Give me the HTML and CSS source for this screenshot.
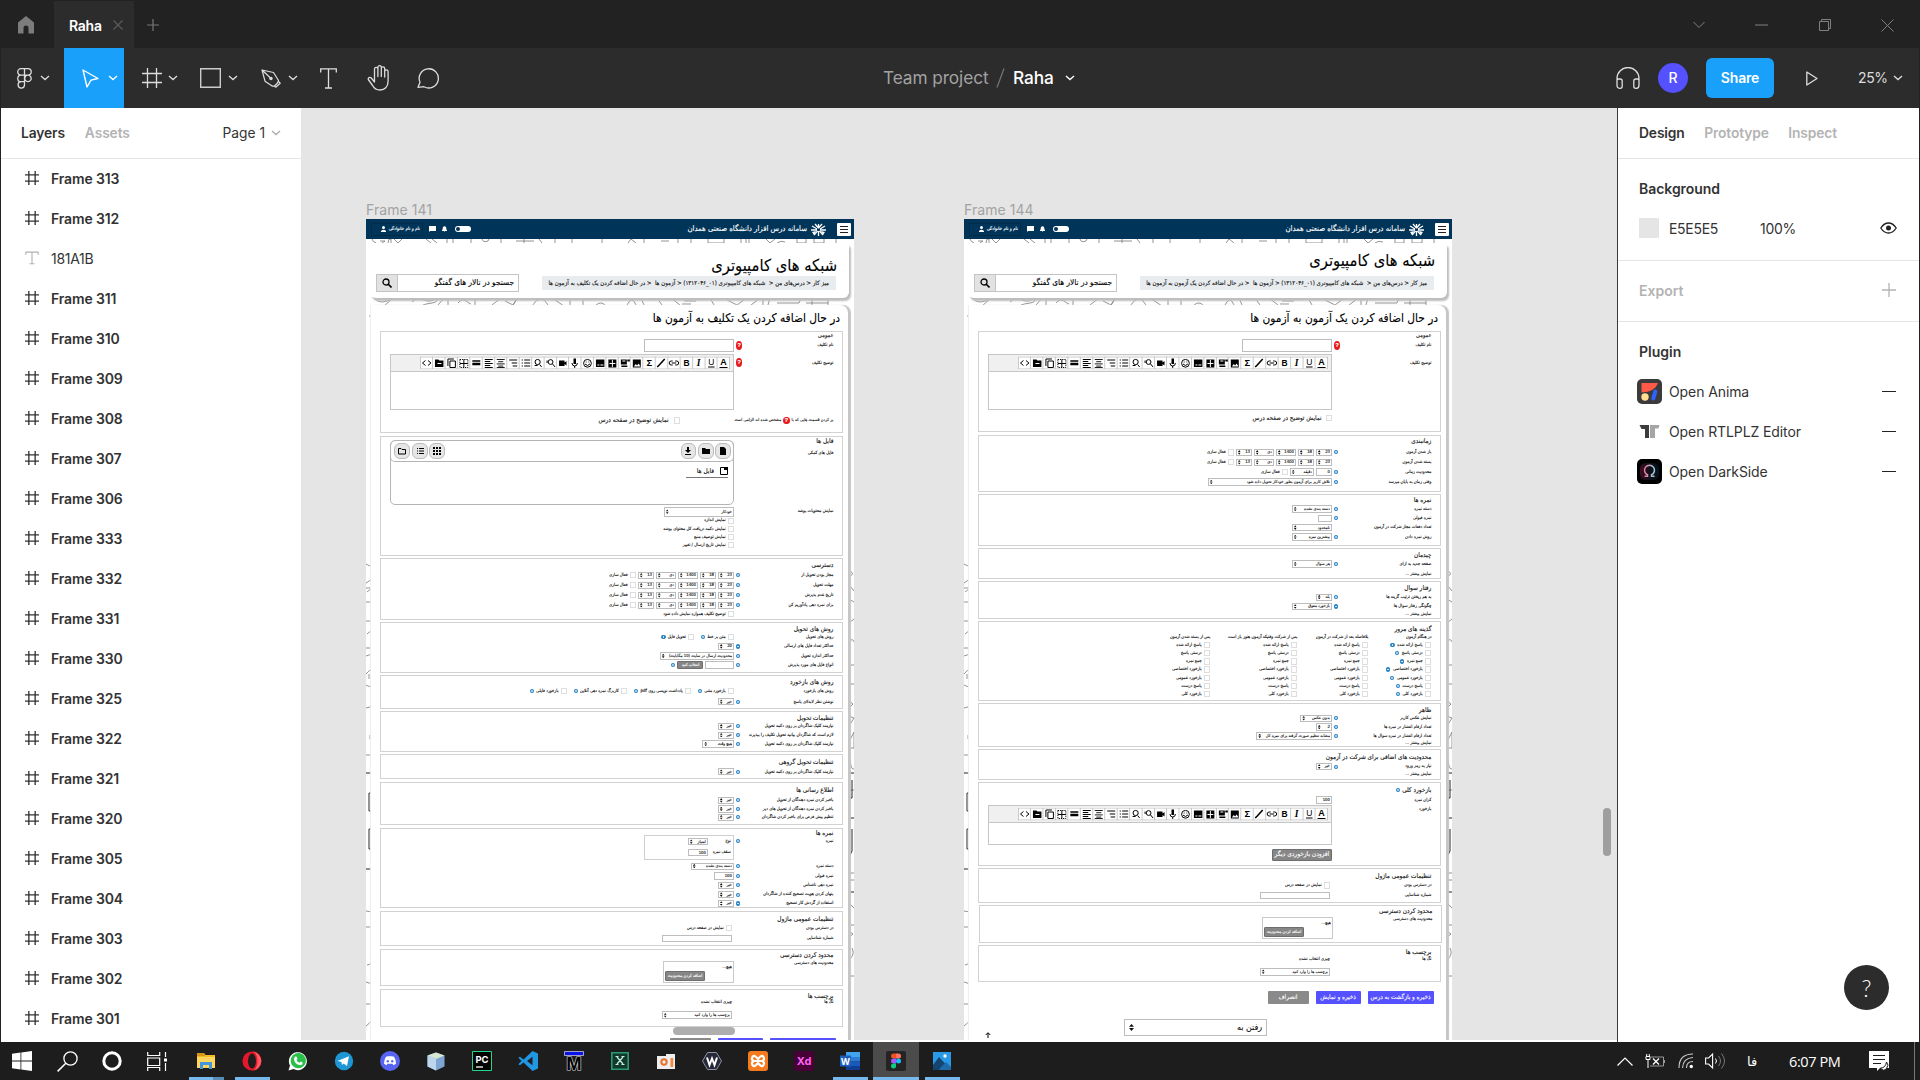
FILE: index.html
```html
<!DOCTYPE html>
<html lang="en">
<head>
<meta charset="utf-8">
<title>Raha</title>
<link rel="stylesheet" href="styles.css">
</head>
<body>
<svg class="defs" width="0" height="0">
  <symbol id="chev" viewBox="0 0 10 6"><path d="M1 1l4 3.6L9 1" fill="none" stroke="currentColor" stroke-width="1.3"/></symbol>
  <symbol id="hash" viewBox="0 0 20 20"><path d="M5.5 0v20M14.5 0v20M0 5.500h20M0 14.500h20" fill="none" stroke="currentColor" stroke-width="1.300"/></symbol>
  <symbol id="hashb" viewBox="0 0 20 20"><path d="M5.5 0v20M14.5 0v20M0 5.500h20M0 14.500h20" fill="none" stroke="currentColor" stroke-width="1.900"/></symbol>
  <symbol id="doodle" viewBox="0 0 488 821">
    <g fill="none" stroke="#777" stroke-width=".8">
      <path d="M6 20q1 3 4 4M14 22h5l-3 2M22 24l1-4h2v4M28 20l4 4 4-4M60 20l5 4M66 20l5 4M81 20v4M87 20v4M105 20v4M116 20q1 4 6 2l1-2M135 20v4M150 22h18M158 20v4M173 20l3 4M189 20v4M206 20v4M236 20v4M262 24l3-4 5 4M278 20v4M295 22h8M312 20v4M325 20v4M342 20v4h16v-4M375 20v4M380 20v4M383 20v4M400 20l4 4 5-4M411 24q4-3 8-1M431 20v4h9v-4M448 20v4h10v-4M470 20v4"/>
      <path d="M8 79q7 8 19 0M26 80l-8 7M46 83q5-5 12-2t12-2q3 4-4 5t-9 2M72 86l6-7M82 79v7M92 84q4-5 8-2t5 3M109 79v7M126 86l9-7M139 82l8 4 4-7M147 86l5-7M166 87q9-14 16-1M186 79l12 8M204 79v7M217 79v7M230 86q5-4 9 0M261 86q5-10 9 0M275 79l3 7M291 79l5 7M305 79l9 7M318 82h12M316 85h9M344 79l4 7M361 81l10 5 8-6M385 86l8-6h10M397 79v7M404 79l-2 7M411 84h22l2-5M440 80h22M440 84h22M446 79v7M462 79v7"/>
      <path d="M3 97h4l-2 6M0 345l6 3M0 364l6-4M0 369h6l-5 4M0 383h6M0 402h6M1 415l5-4M0 429h6M0 437l6-2M0 455q5-6 6-3M0 466q5 3 6 0M0 489q5 0 6-4M3 455v5M4 516v4M0 536h6M0 692l6 1M0 708h6M1 746q6 0 4-10M0 763l6 2M0 785h6M0 807q3-2 6-6"/>
      <path d="M483 352q7 2 0 6M484 367l4 5M483 380l5 3M483 404l5-4M483 422q4-3 5 1M483 446h5M484 465h4M483 482l4 3-4 4M483 497l5 2-5 8M484 521l4-8v16M483 529h5M484 541q1 10 4 9M483 571h5M483 654h5M483 661h5M484 685l4 4M483 706h5M483 712l4 3-4 3M484 740q5-5 2-11M483 757h5M484 781v22"/>
    </g>
    <path d="M0 554h6M6 574H3v18h3M6 610H3v20h3M0 650h6M483 554h5M483 579h3v-18M483 599h5M486 610v22l-3 6M483 673h5" fill="none" stroke="#222"/>
  </symbol>
  <symbol id="edtools" viewBox="0 0 311 13">
    <path d="M0 0h311v13H0z" fill="#fff"/>
    <path d="M.5 0v13M12.500 0v13M25 0v13M37.500 0v13M50 0v13M62.500 0v13M75 0v13M87 0v13M99.500 0v13M112 0v13M124.500 0v13M137 0v13M149 0v13M161.500 0v13M174 0v13M186.500 0v13M199 0v13M211 0v13M223.500 0v13M236 0v13M248.500 0v13M261 0v13M273.500 0v13M286 0v13M298 0v13M310.500 0v13M0 .5h311M0 12.500h311" stroke="#bbb" stroke-width=".8" fill="none"/>
    <g fill="none" stroke="#000" stroke-width="1">
      <path d="M5.500 4l-3 2.500 3 2.500M8 4l3 2.500L8 9"/>
      <path d="M28 9.500V2.500h6M30 4.500h5.500v6.500H30z"/>
      <path d="M44 3v8M40 7h8" /><path d="M40 3h8v8h-8z" stroke-dasharray="1.200 1"/>
      <path d="M52.500 4.500h8" stroke-width="1.500"/><path d="M52.500 7.500h8" stroke-width="2.500"/>
      <path d="M65 3h8M65 5h5.500M65 7h8M65 9h5.500M65 11h8"/>
      <path d="M77 3h8M78.500 5.200h5M77 7.400h8M78.500 9.600h5M77 11h8" stroke-width=".9"/>
      <path d="M89.500 3.500h8M92 6.500h5.500M93 9.500h4.500"/>
      <path d="M102 3.500h1.200M104.500 3.500h6M102 6.500h1.200M104.500 6.500h6M102 9.500h1.200M104.500 9.500h6"/>
      <circle cx="118" cy="5.500" r="2.600"/><path d="M120 8l2 2.500M115 9h3"/>
      <circle cx="131" cy="5.500" r="2.400"/><path d="M133 7.500l2.500 3M127.500 4v2.500"/>
      <path d="M152.500 6.500q0 3 2.700 3t2.700-3M155.200 9.500v2"/>
      <circle cx="168" cy="6.800" r="3.900"/><path d="M165.500 7.500q2.500 3 5 0M166.300 5.500h.8M169 5.500h.8"/>
      <path d="M238 10.500l2-2 5.500-6" stroke-width="1.600"/>
      <path d="M253.500 4.500h-1.500a2 2 0 0 0 0 4h1.500M256 4.500h1.500a2 2 0 0 1 0 4H256M252.500 6.500h4.500"/>
      <path d="M289 10.500h6.500M300.500 11h8" stroke-width="1.200"/>
    </g>
    <path d="M15 3h3.500l1 1h4v6.500H15zM139.500 4h5.500v2l2-1.500v4.500l-2-1.500v2h-5.500zM154 2h2.500v5.500H154zM176.500 3h8.500v7.500h-8.500zM189 3h8v8h-8zM201.500 3h6v5h-6zM208 3h2.500v2H208zM202 9h6v1.500h-6zM213.500 3h8v8h-8z"/>
    <path d="M17.500 7h4M178 8.500h2M181 8.500h3M193 3.500v7M190 7h6M203 4.500h3M208 6h2.500" stroke="#fff"/><path d="M214.500 10l2-2.500 1.300 1.500 1.500-2 2 3z" fill="#fff"/>
    <g font-family="Liberation Sans" font-weight="700" font-size="9.500" text-anchor="middle"><text x="230" y="10">Σ</text><text x="267.500" y="9.800" font-size="8.500">B</text><text x="279.500" y="9.500" font-style="italic" font-family="Liberation Serif">I</text><text x="292.300" y="9" font-size="8.500" font-weight="400">U</text><text x="304.500" y="9" font-size="9">A</text></g>
  </symbol>
</svg>

<header class="tabs">
  <div class="home"><svg width="16" height="18" viewBox="0 0 16 18"><path d="M0 17.500V6.500L8 0l8 6.500v11h-5.500V12a2.500 2.500 0 0 0-5 0v5.500z" fill="#7c7c7c"/></svg></div>
  <div class="tab"><span>Raha</span><svg width="10" height="10" viewBox="0 0 10 10"><path d="M.5.5l9 9M9.500.5l-9 9" stroke="#5a5a5a" stroke-width="1.200"/></svg></div>
  <svg class="newtab" width="12" height="12" viewBox="0 0 12 12"><path d="M6 0v12M0 6h12" stroke="#777" stroke-width="1.200"/></svg>
  <div class="wins">
    <svg width="12" height="8" viewBox="0 0 12 8"><path d="M.5 1l5.500 5.500L11.500 1" fill="none" stroke="#808080"/></svg>
    <svg width="13" height="2"><path d="M0 1h13" stroke="#808080"/></svg>
    <svg width="12" height="12" viewBox="0 0 12 12"><path d="M.5 2.500h9v9h-9zM2.500 2.500v-2h9v9h-2" fill="none" stroke="#808080"/></svg>
    <svg width="13" height="13" viewBox="0 0 13 13"><path d="M.5.5l12 12M12.500.5l-12 12" stroke="#808080"/></svg>
  </div>
</header>

<div class="toolbar">
  <div class="tool t-logo"><svg width="15" height="21" viewBox="0 0 15 21"><path d="M7.500.7H4a3.200 3.200 0 0 0 0 6.500h3.500zm0 0H11a3.200 3.200 0 0 1 0 6.500H7.500zm0 6.500H4a3.200 3.200 0 0 0 0 6.500h3.500zM11 7.200a3.200 3.200 0 1 1-.1 0zM7.500 13.700H4A3.200 3.200 0 1 0 7.500 17z" fill="none" stroke="#ddd" stroke-width="1.300"/></svg><svg class="ch" width="10" height="6"><use href="#chev"/></svg></div>
  <div class="tool t-move"><svg width="17" height="19" viewBox="0 0 17 19"><path d="M1 1l15 8.500-7 1.600L5 18z" fill="none" stroke="#fff" stroke-width="1.400" stroke-linejoin="round"/></svg><svg class="ch" width="10" height="6"><use href="#chev"/></svg></div>
  <div class="tool t-frame"><svg width="20" height="20"><use href="#hash"/></svg><svg class="ch" width="10" height="6"><use href="#chev"/></svg></div>
  <div class="tool t-rect"><svg width="21" height="20" viewBox="0 0 21 20"><path d="M.7.7h19.600v18.600H.7z" fill="none" stroke="#ccc" stroke-width="1.400"/></svg><svg class="ch" width="10" height="6"><use href="#chev"/></svg></div>
  <div class="tool t-pen"><svg width="20" height="19" viewBox="0 0 20 19"><path d="M1 1l11.500 2.500 5 8-1 2.500-3 3-2 .2-7.500-5zM1 1l8.500 8M13 16.800l1.700 1.400 4.500-4-1.700-1.700" fill="none" stroke="#ddd" stroke-width="1.200" stroke-linejoin="round"/><circle cx="10" cy="9.500" r="1.700" fill="#ddd"/></svg><svg class="ch" width="10" height="6"><use href="#chev"/></svg></div>
  <svg class="t-text" width="17" height="21" viewBox="0 0 17 21"><path d="M.7 4.500V.8h15.600v3.700M8.500.8v19M5 20h7" fill="none" stroke="#ddd" stroke-width="1.300"/></svg>
  <svg class="t-hand" width="24" height="26" viewBox="0 0 24 26"><path d="M7.500 14V4a1.700 1.700 0 0 1 3.400 0v7.500V2.400a1.700 1.700 0 0 1 3.400 0v9V3.500a1.700 1.700 0 0 1 3.400 0V12 6.500a1.700 1.700 0 0 1 3.400 0V16c0 6-3.500 9-8 9-3.500 0-6-1.500-7.500-4.500L1.300 14.500c-.6-1.500 1.500-3 3-1.500l3.200 4z" fill="none" stroke="#ddd" stroke-width="1.300" stroke-linejoin="round"/></svg>
  <svg class="t-com" width="23" height="22" viewBox="0 0 23 22"><path d="M1 20.300l2-5A9.600 9.600 0 1 1 7 19.700z" fill="none" stroke="#ddd" stroke-width="1.300" stroke-linejoin="round"/></svg>
  <div class="doc"><span class="team">Team project</span><svg width="9" height="20" viewBox="0 0 9 20"><path d="M8 .5L1 19.500" stroke="#777" stroke-width="1.200"/></svg><span class="file">Raha</span><svg class="ch" width="10" height="6"><use href="#chev"/></svg></div>
  <div class="actions">
    <svg width="24" height="22" viewBox="0 0 24 22"><path d="M1 16V11.500a10.800 10.800 0 0 1 22 0V16M1 16v-2.500q0-1.500 1.500-1.500H4q2.200 0 2.200 2v5.500q0 1.800-2 1.800H3.500Q1 21.300 1 18zM23 16v-2.500q0-1.500-1.500-1.500H20q-2.200 0-2.200 2v5.500q0 1.800 2 1.800h.7q2.500 0 2.500-3.300z" fill="none" stroke="#ddd" stroke-width="1.300"/></svg>
    <span class="avatar">R</span><span class="share">Share</span>
    <svg class="play" width="12" height="15" viewBox="0 0 12 15"><path d="M.8 1v13l10.200-6.500z" fill="none" stroke="#ddd" stroke-width="1.300" stroke-linejoin="round"/></svg>
    <span class="zoom">25%</span><svg class="ch" width="10" height="6"><use href="#chev"/></svg>
  </div>
</div>

<div class="main">
<aside class="left">
  <div class="ptabs"><b>Layers</b><b class="off">Assets</b><span class="page">Page 1<svg width="10" height="6"><use href="#chev"/></svg></span></div>
  <ul class="layers">
    <li><svg><use href="#hashb"/></svg>Frame 313</li><li><svg><use href="#hashb"/></svg>Frame 312</li>
    <li class="txt"><svg viewBox="0 0 17 16"><path d="M1 4V.8h15V4M8.500.8v14M5.500 15h6" fill="none" stroke="#b3b3b3" stroke-width="1.400"/></svg>181A1B</li>
    <li><svg><use href="#hashb"/></svg>Frame 311</li><li><svg><use href="#hashb"/></svg>Frame 310</li><li><svg><use href="#hashb"/></svg>Frame 309</li><li><svg><use href="#hashb"/></svg>Frame 308</li><li><svg><use href="#hashb"/></svg>Frame 307</li><li><svg><use href="#hashb"/></svg>Frame 306</li><li><svg><use href="#hashb"/></svg>Frame 333</li><li><svg><use href="#hashb"/></svg>Frame 332</li><li><svg><use href="#hashb"/></svg>Frame 331</li><li><svg><use href="#hashb"/></svg>Frame 330</li><li><svg><use href="#hashb"/></svg>Frame 325</li><li><svg><use href="#hashb"/></svg>Frame 322</li><li><svg><use href="#hashb"/></svg>Frame 321</li><li><svg><use href="#hashb"/></svg>Frame 320</li><li><svg><use href="#hashb"/></svg>Frame 305</li><li><svg><use href="#hashb"/></svg>Frame 304</li><li><svg><use href="#hashb"/></svg>Frame 303</li><li><svg><use href="#hashb"/></svg>Frame 302</li><li><svg><use href="#hashb"/></svg>Frame 301</li>
  </ul>
</aside>

<main class="canvas">
  <div class="node n141">
    <div class="nlabel">Frame 141</div>
    <div class="board" dir="rtl">
      <svg class="bg"><use href="#doodle"/></svg>
      <div class="bhead"><span class="burger"><i></i><i></i><i></i></span><svg class="uni" width="15" height="13" viewBox="0 0 15 13"><path d="M7.500 5V1M7.500 5L4 1M7.500 5L11 1M6 6L1 3M9 6l5-3M6 7H0M9 7h6M7.500 8v5M6.500 8L3 12M8.500 8L12 12" stroke="#fff" stroke-width="1.300"/><path d="M1 9l4-1-2 4zM14 9l-4-1 2 4z" fill="#fff"/></svg><span class="site">سامانه درس افزار دانشگاه صنعتی همدان</span><span class="tog"></span><svg class="bell" width="5" height="6" viewBox="0 0 5 6"><path d="M0 5V4l.7-.7V2a1.800 1.800 0 0 1 3.600 0v1.300L5 4v1zM2 5.400h1V6H2z" fill="#fff"/></svg><svg class="chat" width="7" height="6" viewBox="0 0 7 6"><path d="M0 0h7v5H1L0 6z" fill="#fff"/></svg><span class="user"><span>نام و نام خانوادگی</span><svg width="5" height="6" viewBox="0 0 5 6"><circle cx="2.500" cy="1.500" r="1.500" fill="#fff"/><path d="M0 6V5q2.500-2.500 5 0v1z" fill="#fff"/></svg></span></div>
      <div class="card1"><div class="ctitle low">شبکه های کامپیوتری</div><div class="crow"><div class="crumb">میز کار &lt; درس‌های من &lt;&nbsp; شبکه های کامپیوتری (۰۱_۱۳۱۲۰۴۶) &lt; آزمون ها &nbsp;&lt; در حال اضافه کردن یک تکلیف به آزمون ها</div><div class="find"><span>جستجو در تالار های گفتگو</span><i><svg width="10" height="10" viewBox="0 0 10 10"><circle cx="4" cy="4" r="3" fill="none" stroke="#000" stroke-width="1.300"/><path d="M6 6l3.500 3.500" stroke="#000" stroke-width="1.600"/></svg></i></div></div></div>
      <div class="card2"><h2>در حال اضافه کردن یک تکلیف به آزمون ها</h2>
      <div class="secs a">
        <section class="s1"><h3 class="sm">عمومی</h3>
          <div class="row"><label>نام تکلیف</label><em>?</em><span class="box w90 h13"></span></div>
          <div class="row top"><label class="l24">توضیح تکلیف</label><em class="m7">?</em><div class="editor"><svg><use href="#edtools"/></svg></div></div>
          <div class="row"><label class="wide">پر کردن قسمت هایی که با <em>?</em> مشخص شده اند الزامی است</label><span class="ck"></span><span class="big">نمایش توضیح در صفحه درس</span></div></section>
        <section class="s2"><h3>فایل ها</h3>
          <div class="row top"><label class="l11">فایل های کمکی</label><u></u><div class="files"><div class="fbar"><b><svg viewBox="0 0 8 8"><path d="M1 0h4l2 2v6H1z"/></svg></b><b><svg viewBox="0 0 8 8"><path d="M0 1h3l1 1h4v5H0z"/></svg></b><b><svg viewBox="0 0 8 8"><path d="M3 0h2v3h2L4 6 1 3h2zM1 7h6v1H1z"/></svg></b><b class="push"><svg viewBox="0 0 8 8"><path d="M0 0h2v2H0zM3 0h2v2H3zM6 0h2v2H6zM0 3h2v2H0zM3 3h2v2H3zM6 3h2v2H6zM0 6h2v2H0zM3 6h2v2H3zM6 6h2v2H6z"/></svg></b><b><svg viewBox="0 0 8 8"><path d="M1 1h1v1H1zM3 1h5v1H3zM1 3.500h1v1H1zM3 3.500h5v1H3zM1 6h1v1H1zM3 6h5v1H3z"/></svg></b><b><svg viewBox="0 0 8 8"><path d="M.5 1.500h2.500l1 1h3.500v4.500h-7z" fill="none" stroke="#000"/></svg></b></div><div class="ftab"><svg width="8" height="8" viewBox="0 0 8 8"><path d="M.5.5h7v7h-7z" fill="none" stroke="#000"/><path d="M4 0h4v3H4z"/></svg><span>فایل ها</span></div></div></div>
          <div class="row"><label>نمایش محتویات پوشه</label><u></u><span class="sel w70 h10">خودکار<i></i></span></div>
          <div class="row c2"><span class="ck"></span><span>نمایش اندازه</span></div>
          <div class="row c2"><span class="ck"></span><span>نمایش دکمه دریافت کل محتوای پوشه</span></div>
          <div class="row c2"><span class="ck"></span><span>نمایش توصیف منبع</span></div>
          <div class="row c2"><span class="ck"></span><span>نمایش تاریخ ارسال / تغییر</span></div></section>
        <section class="s3"><h3>دسترسی</h3>
          <div class="row"><label>مجاز بودن تحویل از</label><u class="q"></u><span class="sel w16">23<i></i></span><span class="sel w16">18<i></i></span><span class="sel w20">1400<i></i></span><span class="sel w20">دی<i></i></span><span class="sel w16">13<i></i></span><span class="ck"></span><span>فعال سازی</span></div>
          <div class="row"><label>مهلت تحویل</label><u class="q"></u><span class="sel w16">23<i></i></span><span class="sel w16">18<i></i></span><span class="sel w20">1400<i></i></span><span class="sel w20">دی<i></i></span><span class="sel w16">13<i></i></span><span class="ck"></span><span>فعال سازی</span></div>
          <div class="row"><label>تاریخ عدم پذیرش</label><u class="q"></u><span class="sel w16">23<i></i></span><span class="sel w16">18<i></i></span><span class="sel w20">1400<i></i></span><span class="sel w20">دی<i></i></span><span class="sel w16">13<i></i></span><span class="ck"></span><span>فعال سازی</span></div>
          <div class="row"><label>برای نمره دهی یادآوریم کن</label><u class="q"></u><span class="sel w16">23<i></i></span><span class="sel w16">18<i></i></span><span class="sel w20">1400<i></i></span><span class="sel w20">دی<i></i></span><span class="sel w16">13<i></i></span><span class="ck"></span><span>فعال سازی</span></div>
          <div class="row c2"><span class="ck"></span><span>توضیح تکلیف همواره نمایش داده شود</span></div></section>
        <section class="s4"><h3>روش های تحویل</h3>
          <div class="row"><label>روش های تحویل</label><u></u><span class="ck"></span><span>متن بر خط</span><u class="q"></u><span class="ck ml"></span><span>تحویل فایل</span><u class="q"></u></div>
          <div class="row"><label>حداکثر تعداد فایل های ارسالی</label><u class="q"></u><span class="sel w16">20<i></i></span></div>
          <div class="row"><label>حداکثر اندازه تحویل</label><u class="q"></u><span class="sel w73">محدودیت ارسال در سایت (10 مگابایت)<i></i></span></div>
          <div class="row"><label>انواع فایل های مورد پذیرش</label><u class="q"></u><span class="box w28"></span><span class="btn w26">انتخاب کنید</span><u class="q"></u></div></section>
        <section class="s5"><h3>روش های بازخورد</h3>
          <div class="row"><label>روش های بازخورد</label><u></u><span class="ck"></span><span>بازخورد متنی</span><u class="q"></u><span class="ck ml"></span><span>یادداشت نویسی روی pdf</span><u class="q"></u><span class="ck ml"></span><span>کاربرگ نمره دهی آنلاین</span><u class="q"></u><span class="ck ml"></span><span>بازخورد فایلی</span><u class="q"></u></div>
          <div class="row"><label>نوشتن نظر لابه‌لای پاسخ</label><u class="q"></u><span class="sel w16">خیر<i></i></span></div></section>
        <section class="s6"><h3>تنظیمات تحویل</h3>
          <div class="row"><label>نیازمند کلیک شاگردان بر روی دکمه تحویل</label><u class="q"></u><span class="sel w16">خیر<i></i></span></div>
          <div class="row"><label>لازم است که شاگردان بیانیه تحویل تکلیف را بپذیرند</label><u class="q"></u><span class="sel w16">خیر<i></i></span></div>
          <div class="row"><label>نیازمند کلیک شاگردان بر روی دکمه تحویل</label><u class="q"></u><span class="sel w31">هیچ وقت<i></i></span></div></section>
        <section class="s7"><h3>تنظیمات تحویل گروهی</h3>
          <div class="row"><label>نیازمند کلیک شاگردان بر روی دکمه تحویل</label><u class="q"></u><span class="sel w16">خیر<i></i></span></div></section>
        <section class="s8"><h3>اطلاع رسانی ها</h3>
          <div class="row"><label>باخبر کردن نمره دهندگان از تحویل</label><u class="q"></u><span class="sel w16">خیر<i></i></span></div>
          <div class="row"><label>باخبر کردن نمره دهندگان از تحویل های دیر</label><u class="q"></u><span class="sel w16">خیر<i></i></span></div>
          <div class="row"><label>تنظیم پیش فرض برای باخبر کردن شاگردان</label><u class="q"></u><span class="sel w16">خیر<i></i></span></div></section>
        <section class="s9"><h3>نمره ها</h3>
          <div class="row top"><label class="l8">نمره</label><u class="q m2"></u><div class="grade"><div><span>نوع</span><span class="sel w20">امتیاز<i></i></span></div><div><span>سقف نمره</span><span class="box w19">100</span></div></div></div>
          <div class="row"><label>دسته نمره</label><u class="q"></u><span class="sel w43">دسته بندی نشده<i></i></span></div>
          <div class="row"><label>نمره قبولی</label><u class="q"></u><span class="box w19">100</span></div>
          <div class="row"><label>نمره دهی ناشناس</label><u class="q"></u><span class="sel w16">خیر<i></i></span></div>
          <div class="row"><label>پنهان کردن هویت تصحیح کننده از شاگردان</label><u class="q"></u><span class="sel w16">خیر<i></i></span></div>
          <div class="row"><label>استفاده از گردش کار تصحیح</label><u class="q"></u><span class="sel w16">خیر<i></i></span></div></section>
        <section class="s10"><h3>تنظیمات عمومی ماژول</h3>
          <div class="row"><label>در دسترس بودن</label><u></u><span class="ck m2l"></span><span>نمایش در صفحه درس</span></div>
          <div class="row"><label>شماره شناسایی</label><u></u><span class="box w70 m2l"></span></div></section>
        <section class="s11"><h3>محدود کردن دسترسی</h3>
          <div class="row top"><label class="l7">محدودیت های دسترسی</label><u></u><div class="limit"><span>هیچ...</span><span class="btn w40 h10">اضافه کردن محدودیت</span></div></div></section>
        <section class="s12"><h3>برچسب ها</h3>
          <div class="row"><label>تگ ها</label><u></u><span class="m2l">چیزی انتخاب نشده</span></div>
          <div class="row"><label></label><u></u><span class="sel w70 h8 m2l">برچسب ها را وارد کنید<i></i></span></div></section>
      </div>
      <div class="btns"><span class="bb w66"></span><span class="bb w45"></span><span class="bb gray w41"></span></div>
      </div>
    </div>
  </div>

  <div class="node n144">
    <div class="nlabel">Frame 144</div>
    <div class="board" dir="rtl">
      <svg class="bg"><use href="#doodle"/></svg>
      <div class="bhead"><span class="burger"><i></i><i></i><i></i></span><svg class="uni" width="15" height="13" viewBox="0 0 15 13"><path d="M7.500 5V1M7.500 5L4 1M7.500 5L11 1M6 6L1 3M9 6l5-3M6 7H0M9 7h6M7.500 8v5M6.500 8L3 12M8.500 8L12 12" stroke="#fff" stroke-width="1.300"/><path d="M1 9l4-1-2 4zM14 9l-4-1 2 4z" fill="#fff"/></svg><span class="site">سامانه درس افزار دانشگاه صنعتی همدان</span><span class="tog"></span><svg class="bell" width="5" height="6" viewBox="0 0 5 6"><path d="M0 5V4l.7-.7V2a1.800 1.800 0 0 1 3.600 0v1.300L5 4v1zM2 5.400h1V6H2z" fill="#fff"/></svg><svg class="chat" width="7" height="6" viewBox="0 0 7 6"><path d="M0 0h7v5H1L0 6z" fill="#fff"/></svg><span class="user"><span>نام و نام خانوادگی</span><svg width="5" height="6" viewBox="0 0 5 6"><circle cx="2.500" cy="1.500" r="1.500" fill="#fff"/><path d="M0 6V5q2.500-2.500 5 0v1z" fill="#fff"/></svg></span></div>
      <div class="card1"><div class="ctitle">شبکه های کامپیوتری</div><div class="crow"><div class="crumb">میز کار &lt; درس‌های من &lt;&nbsp; شبکه های کامپیوتری (۰۱_۱۳۱۲۰۴۶) &lt; آزمون ها &nbsp;&lt; در حال اضافه کردن یک آزمون به آزمون ها</div><div class="find"><span>جستجو در تالار های گفتگو</span><i><svg width="10" height="10" viewBox="0 0 10 10"><circle cx="4" cy="4" r="3" fill="none" stroke="#000" stroke-width="1.300"/><path d="M6 6l3.500 3.500" stroke="#000" stroke-width="1.600"/></svg></i></div></div></div>
      <div class="card2"><h2>در حال اضافه کردن یک آزمون به آزمون ها</h2>
      <div class="secs b">
        <section class="s1"><h3 class="sm">عمومی</h3>
          <div class="row"><label>نام تکلیف</label><em>?</em><span class="box w90 h13"></span></div>
          <div class="row top"><label class="l24">توضیح تکلیف</label><u></u><div class="editor"><svg><use href="#edtools"/></svg></div></div>
          <div class="row up"><label></label><u></u><span class="ck"></span><span class="big b2">نمایش توضیح در صفحه درس</span></div></section>
        <section class="t2"><h3>زمانبندی</h3>
          <div class="row"><label>باز شدن آزمون</label><u class="q"></u><span class="sel w16">23<i></i></span><span class="sel w16">18<i></i></span><span class="sel w20">1400<i></i></span><span class="sel w20">دی<i></i></span><span class="sel w16">13<i></i></span><span class="ck"></span><span>فعال سازی</span></div>
          <div class="row"><label>بسته شدن آزمون</label><u></u><span class="sel w16">23<i></i></span><span class="sel w16">18<i></i></span><span class="sel w20">1400<i></i></span><span class="sel w20">دی<i></i></span><span class="sel w16">13<i></i></span><span class="ck"></span><span>فعال سازی</span></div>
          <div class="row"><label>محدودیت زمانی</label><u class="q"></u><span class="box w16">0</span><span class="sel w24">دقیقه<i></i></span><span class="ck"></span><span>فعال سازی</span></div>
          <div class="row"><label>وقتی زمان به پایان میرسد</label><u class="q"></u><span class="sel w124">تلاش کاربر برای آزمون بطور خودکار تحویل داده شود<i></i></span></div></section>
        <section class="t3"><h3>نمره ها</h3>
          <div class="row"><label>دسته نمره</label><u class="q"></u><span class="sel w40">دسته بندی نشده<i></i></span></div>
          <div class="row"><label>نمره قبولی</label><u class="q"></u><span class="box w13"></span></div>
          <div class="row"><label>تعداد دفعات مجاز شرکت در آزمون</label><u></u><span class="sel w40">نامحدود<i></i></span></div>
          <div class="row"><label>روش نمره دادن</label><u class="q"></u><span class="sel w40">بیشترین نمره<i></i></span></div></section>
        <section class="t4"><h3>چیدمان</h3>
          <div class="row"><label>صفحه جدید به ازای</label><u class="q"></u><span class="sel w40">هر سوال<i></i></span></div>
          <div class="row"><label>نمایش بیشتر ...</label></div></section>
        <section class="t5"><h3>رفتار سوال</h3>
          <div class="row"><label>به هم ریختن ترتیب گزینه ها</label><u class="q"></u><span class="sel w16">بله<i></i></span></div>
          <div class="row"><label>چگونگی رفتار سوال ها</label><u class="q"></u><span class="sel w40">بازخورد معوق<i></i></span></div>
          <div class="row"><label>نمایش بیشتر ...</label></div></section>
        <section class="t6"><h3>گذینه های مرور</h3>
          <div class="rev">
            <div><p>در هنگام آزمون</p><p><span class="ck"></span>پاسخ ارائه شده<u class="q"></u></p><p><span class="ck"></span>درستی پاسخ<u class="q"></u></p><p><span class="ck"></span>جمع نمره<u class="q"></u></p><p><span class="ck"></span>بازخورد اختصاصی<u class="q"></u></p><p><span class="ck"></span>بازخورد عمومی<u class="q"></u></p><p><span class="ck"></span>پاسخ درست<u class="q"></u></p><p><span class="ck"></span>بازخورد کلی<u class="q"></u></p></div>
            <div><p>بلافاصله بعد از شرکت در آزمون</p><p><span class="ck"></span>پاسخ ارائه شده</p><p><span class="ck"></span>درستی پاسخ</p><p><span class="ck"></span>جمع نمره</p><p><span class="ck"></span>بازخورد اختصاصی</p><p><span class="ck"></span>بازخورد عمومی</p><p><span class="ck"></span>پاسخ درست</p><p><span class="ck"></span>بازخورد کلی</p></div>
            <div><p>پس از شرکت وقتیکه آزمون هنوز باز است</p><p><span class="ck"></span>پاسخ ارائه شده</p><p><span class="ck"></span>درستی پاسخ</p><p><span class="ck"></span>جمع نمره</p><p><span class="ck"></span>بازخورد اختصاصی</p><p><span class="ck"></span>بازخورد عمومی</p><p><span class="ck"></span>پاسخ درست</p><p><span class="ck"></span>بازخورد کلی</p></div>
            <div><p>پس از بسته شدن آزمون</p><p><span class="ck"></span>پاسخ ارائه شده</p><p><span class="ck"></span>درستی پاسخ</p><p><span class="ck"></span>جمع نمره</p><p><span class="ck"></span>بازخورد اختصاصی</p><p><span class="ck"></span>بازخورد عمومی</p><p><span class="ck"></span>پاسخ درست</p><p><span class="ck"></span>بازخورد کلی</p></div>
          </div></section>
        <section class="t7"><h3>ظاهر</h3>
          <div class="row"><label>نمایش عکس کاربر</label><u class="q"></u><span class="sel w31">بدون عکس<i></i></span></div>
          <div class="row"><label>تعداد ارقام اعشار در نمره ها</label><u class="q"></u><span class="sel w16">2<i></i></span></div>
          <div class="row"><label>تعداد ارقام اعشار در نمره سوال ها</label><u class="q"></u><span class="sel w75">مشابه تنظیم صورت گرفته برای نمره کل<i></i></span></div>
          <div class="row"><label>نمایش بیشتر ...</label></div></section>
        <section class="t8"><h3>محدودیت های اضافی برای شرکت در آزمون</h3>
          <div class="row"><label>نیاز به رمز ورود</label><u class="q"></u><span class="sel w16">خیر<i></i></span></div>
          <div class="row"><label>نمایش بیشتر ...</label></div></section>
        <section class="t9"><h3>بازخورد کلی <u class="q"></u></h3>
          <div class="row"><label>کران نمره</label><u></u><span class="box w16">100</span></div>
          <div class="row top"><label class="l8">بازخورد</label><u></u><div class="editor short"><svg><use href="#edtools"/></svg></div></div>
          <div class="row"><label></label><u></u><span class="btn w60">افزودن بازخوردی دیگر</span></div></section>
        <section class="s10"><h3>تنظیمات عمومی ماژول</h3>
          <div class="row"><label>در دسترس بودن</label><u></u><span class="ck m2l"></span><span>نمایش در صفحه درس</span></div>
          <div class="row"><label>شماره شناسایی</label><u></u><span class="box w70 m2l"></span></div></section>
        <section class="s11 shift"><h3>محدود کردن دسترسی</h3>
          <div class="row top"><label class="l7">محدودیت های دسترسی</label><u></u><div class="limit"><span>هیچ...</span><span class="btn w40 h10">اضافه کردن محدودیت</span></div></div></section>
        <section class="s12"><h3>برچسب ها</h3>
          <div class="row"><label>تگ ها</label><u></u><span class="m2l">چیزی انتخاب نشده</span></div>
          <div class="row"><label></label><u></u><span class="sel w70 h8 m2l">برچسب ها را وارد کنید<i></i></span></div></section>
      </div>
      <div class="btns b"><span class="bb w66">ذخیره و بازگشت به درس</span><span class="bb w45">ذخیره و نمایش</span><span class="bb gray w41">انصراف</span></div>
      <div class="foot"><span class="sel goto">رفتن به<i></i></span><svg width="6" height="6" viewBox="0 0 6 6"><path d="M3 6V1M.7 3L3 .7 5.300 3" fill="none" stroke="#000"/></svg></div>
      </div>
    </div>
  </div>
  <i class="vbar"></i><i class="hbar"></i>
</main>

<aside class="right">
  <div class="ptabs"><b>Design</b><b class="off">Prototype</b><b class="off">Inspect</b></div>
  <div class="pbg"><b>Background</b><div class="fill"><i></i><span class="hex">E5E5E5</span><span>100%</span><svg width="17" height="12" viewBox="0 0 17 12"><path d="M.8 6Q4 1 8.500 1t7.700 5Q13 11 8.500 11T.8 6z" fill="none" stroke="#222" stroke-width="1.300"/><circle cx="8.500" cy="6" r="2.500" fill="#222"/></svg></div></div>
  <div class="pexp"><b>Export</b><svg width="14" height="14"><path d="M7 0v14M0 7h14" stroke="#b3b3b3" stroke-width="1.300"/></svg></div>
  <div class="pplug"><b>Plugin</b>
    <div class="plug"><svg width="25" height="25" viewBox="0 0 25 25"><rect width="25" height="25" rx="5" fill="#3b3b3b"/><path d="M4.500 4H21q-3 9-16.500 9.500z" fill="#ff5a48"/><circle cx="8" cy="18" r="3.700" fill="#ffdf90"/><path d="M18.300 12.500l-2 7" stroke="#2f62ff" stroke-width="4" stroke-linecap="round"/></svg><span>Open Anima</span><i></i></div>
    <div class="plug"><svg width="25" height="25" viewBox="0 0 25 25"><path d="M2.500 6H12v13H8V10H4.500z" fill="#3c3c3c"/><path d="M13 6h9.500l-1 3.500H18V19h-5z" fill="#a5a5a5"/></svg><span>Open RTLPLZ Editor</span><i></i></div>
    <div class="plug"><svg width="25" height="25" viewBox="0 0 25 25"><defs><linearGradient id="ds"><stop offset="0" stop-color="#400c24"/><stop offset=".5" stop-color="#101018"/><stop offset="1" stop-color="#03141c"/></linearGradient><linearGradient id="om"><stop stop-color="#e87c9c"/><stop offset="1" stop-color="#a0cfe0"/></linearGradient></defs><rect width="25" height="25" rx="5" fill="#000"/><rect x="3" y="4" width="19" height="17" rx="6" fill="url(#ds)"/><path d="M7.500 17.300h3v-1.500a5 5 0 1 1 4 0v1.500h3" fill="none" stroke="url(#om)" stroke-width="1.500"/></svg><span>Open DarkSide</span><i></i></div>
  </div>
  <div class="help">?</div>
</aside>
</div>

<footer class="taskbar">
  <div class="sys"><svg width="20" height="20" viewBox="0 0 20 20"><path d="M0 2.800l8.500-1.200v8H0zM9.300 1.500L20 0v9.600H9.300zM0 10.400h8.500v8L0 17.200zM9.300 10.400H20V20L9.300 18.500z" fill="#fff"/></svg></div>
  <div class="sys"><svg width="21" height="21" viewBox="0 0 21 21"><circle cx="13.500" cy="7.500" r="6.600" fill="none" stroke="#fff" stroke-width="1.300"/><path d="M8.800 12.200L.6 20.400" stroke="#fff" stroke-width="1.500"/></svg></div>
  <div class="sys"><svg width="20" height="20" viewBox="0 0 20 20"><circle cx="10" cy="10" r="8.200" fill="none" stroke="#fff" stroke-width="3"/></svg></div>
  <div class="sys"><svg width="20" height="19" viewBox="0 0 20 19"><path d="M.7 0v3.500h12V0M.7 6h12v7.500H.7zM.7 19v-3.500h12V19M18.500 0v5M18.500 11v8" fill="none" stroke="#fff" stroke-width="1.200"/><path d="M17 6.500h3v3h-3z" fill="#fff"/></svg></div>
  <div class="app run first"><svg width="18" height="16" viewBox="0 0 18 16"><path d="M0 0h7l1.500 2H18v13H0z" fill="#f5b921"/><path d="M0 0h7l1 3H0z" fill="#d99614"/><path d="M0 4h18v11H0z" fill="#ffd55e"/><path d="M3 16V9h12v7h-3v-4H6v4z" fill="#3f97dc"/></svg></div>
  <div class="app run"><svg width="20" height="20" viewBox="0 0 20 20"><circle cx="10" cy="10" r="9.600" fill="#e3182d"/><path d="M11 .5a9.600 9.600 0 0 1 0 19c6-2 6-17 0-19z" fill="#ff5c63"/><ellipse cx="10" cy="10" rx="4" ry="7.500" fill="#1d1d1d"/></svg></div>
  <div class="app"><svg width="20" height="20" viewBox="0 0 20 20"><path d="M.5 19.500L2 14.500A9 9 0 1 1 5.500 18z" fill="#fff"/><circle cx="10.300" cy="9.700" r="7.600" fill="#29c04a"/><path d="M7 5.500l1.700.2.800 2-1 1.200q1 2 3 2.800l1.200-1.200 2 1q.2 2.500-2.200 2.800Q6 13.500 6 7.500z" fill="#fff"/></svg></div>
  <div class="app"><svg width="20" height="20" viewBox="0 0 20 20"><circle cx="10" cy="10" r="9.200" fill="#1f96d4"/><path d="M3.500 10L15 5.300 13 15l-3.500-2.500L8 14l-.6-3z" fill="#fff"/></svg></div>
  <div class="app"><svg width="20" height="20" viewBox="0 0 20 20"><circle cx="10" cy="10" r="10" fill="#5865f2"/><path d="M6 5.800l2-.6h4l2 .6q2 3 2 7l-2.500 1.400-1-1.400h-5l-1 1.400L4 12.800q0-4 2-7z" fill="#fff"/><circle cx="7.800" cy="10.300" r="1.200" fill="#5865f2"/><circle cx="12.200" cy="10.300" r="1.200" fill="#5865f2"/></svg></div>
  <div class="app"><svg width="18" height="19" viewBox="0 0 18 19"><path d="M9 .5l8.500 3v11L9 18.500.5 14.500v-11z" fill="#7fa6d3"/><path d="M9 .5l8.500 3L9 7 .5 3.500z" fill="#d8e8d0"/><path d="M.5 3.500L9 7v11.500L.5 14.500z" fill="#bcd6ee"/></svg></div>
  <div class="app"><svg width="20" height="20" viewBox="0 0 20 20"><path d="M.5.5h19v19H.5z" fill="#000" stroke="#21d789"/><path d="M4 16h7" stroke="#fff" stroke-width="1.300"/><text x="10" y="11.500" font-family="Inter" font-weight="700" font-size="9.500" text-anchor="middle" fill="#fff">PC</text></svg></div>
  <div class="app"><svg width="20" height="20" viewBox="0 0 20 20"><path d="M14.500 0L20 2.500v15L14.500 20 5.500 11.500 2 14.300.3 13.200 3.500 10 .3 6.800 2 5.700l3.500 2.800zM14.500 5.800L9 10l5.500 4.200z" fill="#2196e3" fill-rule="evenodd"/></svg></div>
  <div class="app"><svg width="20" height="20" viewBox="0 0 20 20"><text x="10" y="19" font-family="Liberation Sans" font-weight="700" font-size="18.500" text-anchor="middle" fill="#000" stroke="#ddd" stroke-width="1.200" paint-order="stroke">M</text><path d="M.5.500h19v4H.5z" fill="#0a12e6" stroke="#fff" stroke-width=".6"/></svg></div>
  <div class="app"><svg width="18" height="18" viewBox="0 0 18 18"><path d="M.8.8h16.400v16.400H.8z" fill="#12382c" stroke="#2b9b76" stroke-width="1.600"/><path d="M6 5l6 7M12 5l-6 7M4.500 4.500h3M13.500 4.500h-3M4.500 12.500h3M13.500 12.500h-3" stroke="#c4efe0" stroke-width="1.200"/></svg></div>
  <div class="app"><svg width="18" height="16" viewBox="0 0 18 16"><path d="M0 3h9V1h9v15H0z" fill="#eee"/><circle cx="7" cy="9" r="2.700" fill="none" stroke="#e8702a" stroke-width="2"/><path d="M13.500 5h2.700v9h-2.700z" fill="#f58a3c"/></svg></div>
  <div class="app"><svg width="20" height="18" viewBox="0 0 20 18"><path d="M5.500.5h9l5 8.500-5 8.500h-9L.5 9z" fill="#262a38" stroke="#8d93a5"/><path d="M5 5.500L7.500 13 10 6.500l2.500 6.500L15 5.500" fill="none" stroke="#fff" stroke-width="2"/></svg></div>
  <div class="app"><svg width="20" height="20" viewBox="0 0 20 20"><rect width="20" height="20" rx="3" fill="#f47b20"/><path d="M10 8Q6 3 4.500 6T6 10q-3 1-1.500 4T10 12q4 5 5.500 2T14 10q3-1 1.500-4T10 8zM7 10h6" fill="none" stroke="#fff" stroke-width="2.200"/></svg></div>
  <div class="app"><svg width="20" height="20" viewBox="0 0 20 20"><rect width="20" height="20" rx="3" fill="#470137"/><text x="10" y="14" font-family="Inter" font-weight="700" font-size="11" text-anchor="middle" fill="#ff61f6">Xd</text></svg></div>
  <div class="app run"><svg width="20" height="18" viewBox="0 0 20 18"><path d="M6 0h14v5H6z" fill="#41a5ee"/><path d="M6 5h14v4.500H6z" fill="#2b7cd3"/><path d="M6 9.500h14V14H6z" fill="#185abd"/><path d="M6 14h14v4H6z" fill="#103f91"/><path d="M0 3.500h11v11H0z" fill="#1d5fbf"/><text x="5.500" y="12.500" font-family="Inter" font-weight="700" font-size="9" text-anchor="middle" fill="#fff">W</text></svg></div>
  <div class="app run on"><svg width="20" height="20" viewBox="0 0 20 20"><rect width="20" height="20" rx="2" fill="#242424"/><path d="M10 2.500H7.500a2.500 2.500 0 0 0 0 5H10z" fill="#f24e1e"/><path d="M10 2.500h2.500a2.500 2.500 0 0 1 0 5H10z" fill="#ff7262"/><path d="M10 7.500H7.500a2.500 2.500 0 0 0 0 5H10z" fill="#a259ff"/><circle cx="12.500" cy="10" r="2.500" fill="#1abcfe"/><path d="M10 12.500H7.500A2.500 2.500 0 1 0 10 15z" fill="#0acf83"/></svg></div>
  <div class="app run"><svg width="18" height="18" viewBox="0 0 18 18"><path d="M0 0h18v18H0z" fill="#2a9ae8"/><circle cx="12" cy="4" r="1.700" fill="#fff"/><path d="M0 13l6-8 12 13H0z" fill="#14456f"/><path d="M8 15l5-5 5 5v3H6z" fill="#1d6bab"/></svg></div>
  <div class="tray">
    <svg width="16" height="9" viewBox="0 0 16 9"><path d="M.5 8.500L8 1l7.500 7.500" fill="none" stroke="#fff" stroke-width="1.200"/></svg>
    <svg class="bat" width="20" height="14" viewBox="0 0 20 14"><path d="M1 2.500h4v3H1zM1.700 0v2M4.300 0v2M3 6v8" stroke="#fff" fill="none"/><path d="M6 3h12.500v9H5M19.500 6v3" fill="none" stroke="#999"/><path d="M8 4.500l6 6M14 4.500l-6 6" stroke="#fff" stroke-width="1.300"/></svg>
    <svg class="wifi" width="16" height="16" viewBox="0 0 16 16"><path d="M1 15Q1 1 15 1M4.500 15Q5 5 15 4.500M8.500 15Q8.500 8.500 15 8.500" fill="none" stroke="#ccc" stroke-width="1.100"/><circle cx="13.300" cy="13.500" r="1.700" fill="#fff"/></svg>
    <svg class="vol" width="21" height="18" viewBox="0 0 21 18"><path d="M.6 6h3l4-4v14l-4-4h-3z" fill="none" stroke="#fff" stroke-width="1.100"/><path d="M10.500 6.500q2 2.500 0 5" fill="none" stroke="#fff"/><path d="M13.500 4q4 5 0 10M16.500 1.500q6 7.500 0 15" fill="none" stroke="#777"/></svg>
    <span class="lang">فا</span><span class="time">6:07 PM</span>
    <svg class="noti" width="21" height="20" viewBox="0 0 21 20"><path d="M0 0h20v17H11l-3 3v-3H0z" fill="#fff"/><path d="M4 4.500h12M4 8.500h12M4 12.500h8" stroke="#1d1d1d"/><path d="M17.500 11q3 3 0 6.500t-6-.500q5 0 6-6z" fill="#fff" stroke="#1d1d1d"/></svg>
  </div>
</footer>
</body>
</html>
```
FILE: styles.css
```css
* { box-sizing: border-box; }
body { margin: 0; width: 1920px; height: 1080px; overflow: hidden; display: flex; flex-direction: column; background: #fff; font-family: Inter, sans-serif; font-size: 14px; color: #333; }
svg { flex: none; display: block; }
.defs { position: absolute; }
b { font-weight: 600; }

.tabs { height: 48px; background: #222; display: flex; align-items: center; }
.home { width: 54px; padding: 2px 0 0 18px; }
.tab { width: 80px; height: 47px; margin-top: 1px; background: #2c2c2c; display: flex; align-items: center; padding: 1px 0 0 15px; gap: 11px; color: #fff; font-weight: 600; letter-spacing: -.25px; }
.newtab { margin: 2px 0 0 13px; }
.wins { margin-left: auto; display: flex; align-items: center; justify-content: space-between; width: 201px; margin-right: 26px; padding-top: 2px; }

.toolbar { height: 60px; background: #2c2c2c; border-left: 1px solid #222; border-right: 1px solid #222; display: flex; align-items: center; color: #ddd; }
.tool { display: flex; align-items: center; height: 60px; }
.tool .ch { margin-left: auto; }
.t-logo { width: 47px; margin-left: 16px; padding-right: 17px; }
.t-logo .ch { margin-right: -3px; }
.t-move { width: 60px; background: #18a0fb; color: #fff; padding: 0 6px 0 18px; }
.t-frame { width: 36px; margin-left: 18px; }
.t-rect { width: 38px; margin-left: 22px; }
.t-pen { width: 37px; margin-left: 23px; }
.t-text { margin-left: 22px; }
.t-hand { margin-left: 30px; }
.t-com { margin-left: 26px; }
.doc { margin-left: 443px; display: flex; align-items: center; font-size: 17.300px; letter-spacing: -.1px; }
.doc span { padding-bottom: 2px; }
.team { color: #a2a2a2; width: 113px; }
.file { color: #fff; font-weight: 500; margin: 0 12px 0 8px; width: 41px; }
.doc .ch { color: #fff; margin-left: -1px; }
.actions { margin-left: auto; display: flex; align-items: center; padding-right: 16px; }
.avatar { width: 30px; height: 30px; border-radius: 50%; background: #5551ff; color: #fff; font-weight: 500; display: grid; place-items: center; margin: 0 18px; padding-bottom: 1px; }
.share { width: 68px; height: 40px; border-radius: 6px; background: #18a0fb; color: #fff; font-weight: 600; display: grid; place-items: center; letter-spacing: -.15px; padding-bottom: 1px; }
.play { margin-left: 32px; }
.zoom { margin: 0 6px 0 40px; width: 29px; letter-spacing: -.4px; font-size: 14px; padding-bottom: 1px; }

.main { height: 934px; display: flex; border-left: 1px solid #222; border-right: 1px solid #222; }
.left { width: 300px; background: #fff; }
.ptabs { height: 51px; display: flex; align-items: center; padding: 0 20px; gap: 20px; border-bottom: 1px solid #e5e5e5; font-size: 13.800px; letter-spacing: -.12px; }
.off { color: #b3b3b3; }
.page { margin-left: auto; display: flex; align-items: center; gap: 6px; letter-spacing: 0; }
.page svg { color: #aaa; }
.layers { list-style: none; margin: -1px 0 0; padding: 0; font-weight: 600; }
.layers li { height: 40px; display: flex; align-items: center; gap: 12px; padding-left: 24px; font-size: 14px; letter-spacing: -.15px; }
.layers svg { width: 14px; height: 14px; color: #333; overflow: visible; }
.layers .txt { font-weight: 400; letter-spacing: -.3px; }

.canvas { width: 1316px; height: 932px; background: #e5e5e5; position: relative; overflow: hidden; }
.node { position: absolute; top: 92px; width: 488px; }
.n141 { left: 65px; }
.n144 { left: 663px; }
.nlabel { height: 19px; line-height: 20px; color: #a3a3a3; font-size: 14px; letter-spacing: .05px; }
.vbar { position: absolute; left: 1302px; top: 700px; width: 8px; height: 48px; border-radius: 4px; background: #9f9f9f; }
.hbar { position: absolute; left: 372px; top: 919px; width: 62px; height: 8px; border-radius: 4px; background: #aeaeae; }

.board { width: 488px; height: 830px; background: #fff; position: relative; overflow: hidden; font-family: "DejaVu Sans Condensed", "DejaVu Sans", sans-serif; font-stretch: condensed; font-size: 4.400px; color: #111; white-space: nowrap; line-height: 1; -webkit-text-stroke: .12px currentColor; }
.board svg text { -webkit-text-stroke: 0; }
.bg { position: absolute; left: 0; top: 0; width: 488px; height: 821px; }
.bhead { position: relative; height: 20px; background: #003459; color: #fff; display: flex; align-items: center; padding: 0 3px 0 5px; }
.burger { width: 14px; height: 13px; background: #fff; border-radius: 1px; display: flex; flex-direction: column; justify-content: center; gap: 2px; padding: 0 3px; }
.burger i { height: 1px; background: #222; }
.uni { margin-right: 11px; }
.site { margin-right: 4px; font-size: 7.700px; }
.tog { margin-right: auto; width: 16px; height: 6.500px; border-radius: 4px; background: #fff; display: flex; align-items: center; justify-content: flex-end; padding: 0 1px; }
.tog::after { content: ""; width: 4px; height: 4px; border-radius: 50%; background: #003459; }
.bell { margin-right: 8px; }
.chat { margin-right: 6px; }
.user { margin-right: 6px; width: 52px; height: 13px; border: 1px solid #002c4c; display: flex; align-items: center; gap: 3px; padding: 0 2px; font-size: 4.600px; }
.card1 { position: relative; height: 55px; margin: 4px 5px 0 4px; background: #fff; border-radius: 0 4px 6px 6px; box-shadow: 2px 3px 2px #bdbdbd; padding-right: 12px; }
.ctitle { height: 31px; line-height: 35px; font-size: 16.400px; color: #000; }
.ctitle.low { line-height: 45px; }
.crow { display: flex; align-items: center; justify-content: space-between; height: 17px; }
.crumb { width: 294px; height: 14px; line-height: 14px; background: #e9ecef; padding-right: 7px; font-size: 6.100px; margin-right: 1px; flex: none; }
.find { width: 143px; height: 18px; border: 1px solid #c4c4c4; display: flex; justify-content: space-between; align-items: center; padding-right: 4px; font-size: 8.200px; color: #000; margin-left: 6px; flex: none; }
.find i { width: 21px; height: 16px; background: #e2e2e2; border-right: 1px solid #c4c4c4; display: grid; place-items: center; }
.card2 { position: relative; height: 740px; margin: 7px 6px 0 5px; background: #fff; border-radius: 0 8px 0 0; box-shadow: 3px 0 1px #c6c6c6, -1px 0 1px #eee; }
.card2 h2 { margin: 0; height: 25.500px; line-height: 27px; padding-right: 8px; font-size: 11.800px; font-weight: 400; color: #000; }
.secs { display: grid; margin: 0 4.600px 0 10.700px; }
.a { row-gap: 2.700px; grid-template-rows: 102.500px 119.900px 61.300px 50.300px 33.300px 40.300px 25px 43.300px 80.600px 35px 37.300px 37.700px; }
.secs.b { row-gap: 2.300px; grid-template-rows: 101.900px 57.300px 51.700px 30.900px 37.200px 80.200px 43.500px 30.400px 84px 34.400px 38px 37.200px; }
section { border: 1px solid #d2d2d2; padding: 0 9px; display: grid; align-content: start; align-items: center; }
section h3 { margin: 0; font-size: 6.400px; font-weight: 400; color: #111; }
section h3.sm { font-size: 5.600px; }
h3 .q { display: inline-block; }
.s1 { grid-template-rows: 7.600px 12.400px 59px 20px; }
.s2 { grid-template-rows: 10px 60px 10px 8px 8.200px 8.300px 8.200px; }
.s3 { grid-template-rows: 11px 10px 10px 10px 10px 8px; }
.s4 { padding-top: 2.400px; grid-template-rows: 6.600px 9.400px 9.600px 9.400px 8.600px; }
.s5 { padding-top: 1px; grid-template-rows: 9px 10px 11px; }
.s6 { padding-top: 1.600px; grid-template-rows: 8.200px 8.800px 8.800px 8.800px; }
.s7 { padding-top: 2.200px; grid-template-rows: 9.600px 9.600px; }
.s8 { padding-top: 1.400px; grid-template-rows: 11.800px 8.600px 8.400px 8.500px; }
.s9 { padding-top: .5px; grid-template-rows: 7.500px 24.400px 9.800px 9.600px 9.400px 9.200px 8.600px; }
.s10 { padding-top: 2.400px; grid-template-rows: 9px 9.600px 10.400px; }
.s11 { padding-top: 1.600px; grid-template-rows: 8px 25px; }
.s12 { padding-top: 2.600px; grid-template-rows: 6.600px 6.800px 19px; }
.t2 { grid-template-rows: 11.800px 9.800px 9.900px 9.700px 10.300px; }
.t3 { grid-template-rows: 9.200px 9px 9.600px 9.200px 9.400px; }
.t4 { padding-top: 2px; grid-template-rows: 8px 9.400px 10.600px; }
.t5 { padding-top: 2px; grid-template-rows: 8px 9.400px 9.300px 6px; }
.t6 { padding-top: 3px; grid-template-rows: 8px auto; }
.t7 { padding-top: 2px; grid-template-rows: 7.600px 8.600px 9px 8.600px 6.800px; }
.t8 { padding-top: 2.600px; grid-template-rows: 9.200px 9.200px 7px; }
.t9 { padding-top: 2.500px; grid-template-rows: 10px 9.300px 41.200px 17.500px; }
.shift { position: relative; left: 1px; }

.row { display: flex; align-items: center; height: 100%; gap: 2px; min-height: 0; }
.row.top { align-items: flex-start; }
.row.up { padding-bottom: 5px; }
label { width: 91.300px; flex: none; overflow: visible; font-size: 4.400px; }
label.wide { width: 151.500px; font-size: 4.200px; display: flex; align-items: center; gap: 1px; }
.l24 { line-height: 24px; } .l11 { line-height: 11px; } .l8 { line-height: 8px; } .l7 { line-height: 7px; }
u { width: 4.200px; height: 4.200px; flex: none; border-radius: 50%; text-decoration: none; }
.q { background: radial-gradient(circle, #cfe4f5 0 .6px, #2581c4 1px); }
.m2 { margin-top: 2px; }
em { width: 6.400px; height: 8.600px; flex: none; border-radius: 50%; background: #e8191c; color: #fff; font: 700 6px/8.800px "Liberation Sans", sans-serif; text-align: center; margin: 0 -2.200px 0 0; }
label em { margin: 0 1px; height: 7px; line-height: 7px; }
em.m7 { margin-top: 7px; }
.c2 { padding-right: 99.500px; }
.ck { width: 6.300px; height: 6.300px; flex: none; border: 1px solid #dedede; }
.ml { margin-right: 5px; }
.m2l { margin-right: 2px; }
.big { font-size: 6.400px; margin-right: 3px; }
.big.b2 { font-size: 6.300px; margin-right: 2px; }
.box, .sel { flex: none; height: 7.300px; border: 1px solid #bdbdbd; display: flex; align-items: center; justify-content: space-between; padding: 0 1px; font-size: 4.200px; }
.sel i { width: 2.600px; height: 4.600px; background: #111; clip-path: polygon(50% 0, 100% 40%, 0 40%, 0 60%, 100% 60%, 50% 100%, 0 60%, 0 40%); }
.h13 { height: 13.300px; } .row .h10 { height: 10px; } .h8 { height: 8px; }
.w13 { width: 13.500px; } .w16 { width: 16px; } .w19 { width: 19.500px; } .w20 { width: 20px; } .w24 { width: 24px; } .w26 { width: 26px; } .w28 { width: 28.500px; } .w31 { width: 31.500px; } .w40 { width: 40px; } .w41 { width: 41px; } .w43 { width: 43px; } .w45 { width: 45px; } .w60 { width: 60px; } .w66 { width: 66px; } .w70 { width: 70px; } .w73 { width: 74px; } .w75 { width: 75.500px; } .w90 { width: 90px; } .w124 { width: 124px; }
.btn { height: 7.500px; background: #868686; border: 1px solid #6e6e6e; border-radius: 1px; color: #fff; display: grid; place-items: center; font-size: 4.200px; flex: none; }
.btn.w60 { height: 12px; font-size: 6.500px; }
.editor { width: 344px; height: 56.500px; margin-top: 2.500px; border: 1px solid #c6c6c6; }
.editor svg { width: 100%; height: 17px; padding: 1.500px 3px 1.500px 29px; background: #f0f0f0; border-bottom: 1px solid #c6c6c6; }
.editor.short { height: 39.700px; margin-top: .5px; }
.files { width: 343.500px; height: 64.400px; margin-top: -6.400px; border: 1px solid #b5b5b5; border-radius: 5px; }
.fbar { height: 21px; margin: 0 -1px; border: solid #b5b5b5; border-width: 0 1px 1px; border-radius: 5px; display: flex; align-items: center; padding: 0 2px 0 3px; gap: 1.500px; }
.fbar b { width: 15.800px; height: 15.800px; border-radius: 6px; border: 1px solid #bbb; background: #e6e6e6; display: grid; place-items: center; }
.fbar .push { margin-right: auto; }
.fbar svg { width: 8px; height: 8px; }
.ftab { width: 42px; height: 16px; margin-right: 5px; border-bottom: 1px solid #777; display: flex; align-items: center; gap: 6px; padding-top: 3px; font-size: 6.400px; }
.grade { width: 90px; height: 25px; margin-top: -1.700px; border: 1px solid #cfcfcf; display: grid; grid-template-rows: 11px 11px; align-items: center; padding: 0 2px; }
.grade div { display: flex; align-items: center; }
.grade div > :first-child { width: 23px; }
.limit { width: 71px; height: 22.500px; margin-top: 1.500px; border: 1px solid #c9c9c9; padding: 3px 1px 0; display: flex; flex-direction: column; justify-content: space-between; }
.limit .btn { align-self: flex-end; margin: 0 0 1px; }
.rev { display: grid; grid-template-columns: 63px 71px 87px 80px; }
.rev p { margin: 0; height: 8.150px; display: flex; align-items: center; gap: 2.500px; }
.btns { display: flex; margin-top: 11.500px; padding-right: 12.500px; gap: 7px; }
.btns.b { margin-top: 9px; }
.bb { height: 12.500px; background: #5551ff; border-radius: 1px; color: #fff; display: grid; place-items: center; font-size: 6.300px; }
.gray { background: #8a8a8a; }
.foot { display: flex; margin-top: 15px; padding: 0 179px 0 16px; justify-content: space-between; align-items: flex-end; }
.foot .goto { width: 143px; height: 17px; font-size: 8.800px; padding: 0 4px; }
.goto i { width: 5px; height: 7px; }
.foot svg { margin-bottom: -2px; }

.right { width: 302px; height: 934px; border-left: 1px solid #3a3a3a; background: #fff; position: relative; }
.right .ptabs { padding-left: 21px; gap: 19.500px; }
.pbg { height: 102px; padding: 21px 20px 0 21px; border-bottom: 1px solid #e5e5e5; line-height: 17px; letter-spacing: -.05px; }
.fill { display: flex; align-items: center; margin-top: 21px; letter-spacing: -.3px; }
.fill i { width: 20px; height: 20px; background: #e5e5e5; margin-right: 10px; }
.hex { width: 91px; }
.fill svg { margin-left: auto; margin-right: 2px; }
.pexp { height: 61px; padding: 0 23px 2px 21px; border-bottom: 1px solid #e5e5e5; display: flex; justify-content: space-between; align-items: center; color: #b3b3b3; }
.pplug { padding: 21px 23px 0 21px; line-height: 17px; }
.plug { height: 40px; display: flex; align-items: center; margin-left: -2px; letter-spacing: -.1px; }
.pplug > b { display: block; margin-bottom: 11px; }
.plug span { margin-left: 7px; }
.plug i { margin-left: auto; width: 14px; height: 1px; background: #222; }
.help { position: absolute; right: 30px; bottom: 32px; width: 45px; height: 45px; border-radius: 50%; background: #2c2c2c; color: #fff; font-family: Lato, sans-serif; font-size: 23px; font-weight: 300; display: grid; place-items: center; }

.taskbar { height: 38px; background: #1d1d1d; display: flex; align-items: center; color: #fff; }
.sys { width: 45px; display: grid; place-items: center; padding-right: 1px; }
.app { width: 46px; height: 38px; display: grid; place-items: center; }
.first { margin-left: 3px; }
.on { background-color: #4b4b4b; }
.run { background-image: linear-gradient(#76b9ed, #76b9ed); background-repeat: no-repeat; background-size: 35px 3px; background-position: 50% 100%; }
.run.on { background-size: 46px 3px; }
.run.first { background-image: linear-gradient(90deg, #76b9ed 24px, #5a8db5 24px); }
.tray { margin-left: auto; display: flex; align-items: center; height: 38px; padding-right: 24px; margin-right: 5px; border-right: 1px solid #777; }
.bat { margin-left: 12px; } .wifi { margin-left: 13px; } .vol { margin-left: 11px; }
.lang { margin-left: 21px; width: 12px; font-family: "DejaVu Sans", sans-serif; font-size: 13px; }
.time { margin-left: 30px; width: 52px; font-family: "Open Sans", sans-serif; font-size: 14.500px; letter-spacing: -.4px; white-space: nowrap; }
.noti { margin-left: 28px; }
```
